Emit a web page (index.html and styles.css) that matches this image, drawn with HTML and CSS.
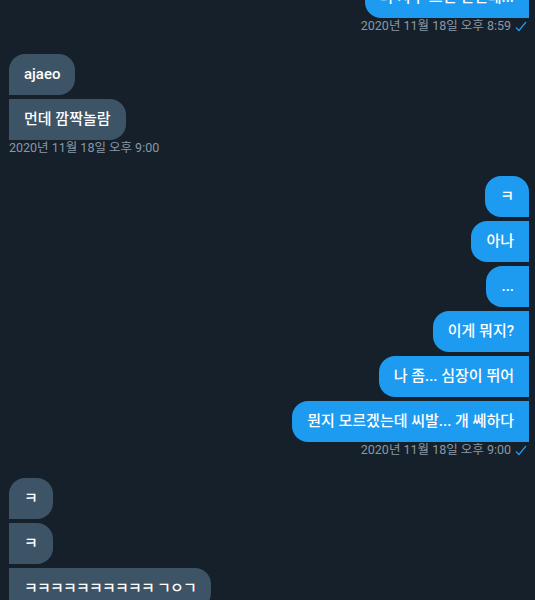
FILE: index.html
```html
<!DOCTYPE html>
<html lang="ko">
<head>
<meta charset="utf-8">
<link rel="stylesheet" href="styles.css">
</head>
<body>
<div class="thread">
  <div class="group sent">
    <div class="bubbles">
      <div class="bubble">나 자꾸 그런 편인데...</div>
    </div>
    <div class="time">2020년 11월 18일 오후 8:59 <svg class="check" width="12" height="11" viewBox="0 0 12 11"><path d="M1 6.5 L4 9.5 L11 1" fill="none" stroke="#1d9bf0" stroke-width="1.2"/></svg></div>
  </div>
  <div class="group recv">
    <div class="bubbles">
      <div class="bubble">ajaeo</div>
      <div class="bubble">먼데 깜짝놀람</div>
    </div>
    <div class="time">2020년 11월 18일 오후 9:00</div>
  </div>
  <div class="group sent">
    <div class="bubbles">
      <div class="bubble">ㅋ</div>
      <div class="bubble">아나</div>
      <div class="bubble">...</div>
      <div class="bubble">이게 뭐지?</div>
      <div class="bubble">나 좀... 심장이 뛰어</div>
      <div class="bubble">뭔지 모르겠는데 씨발... 개 쎄하다</div>
    </div>
    <div class="time">2020년 11월 18일 오후 9:00 <svg class="check" width="12" height="11" viewBox="0 0 12 11"><path d="M1 6.5 L4 9.5 L11 1" fill="none" stroke="#1d9bf0" stroke-width="1.2"/></svg></div>
  </div>
  <div class="group recv">
    <div class="bubbles">
      <div class="bubble">ㅋ</div>
      <div class="bubble">ㅋ</div>
      <div class="bubble tight">ㅋㅋㅋㅋㅋㅋㅋㅋㅋㅋ ㄱㅇㄱ</div>
    </div>
  </div>
</div>
</body>
</html>
```
FILE: styles.css
```css
html, body {
  margin: 0;
  padding: 0;
  background: #15202b;
  height: 100%;
  overflow: hidden;
}
body {
  font-family: "Segoe UI", Roboto, "Noto Sans CJK KR", sans-serif;
  color: #ffffff;
}
.thread {
  display: flex;
  flex-direction: column;
  gap: 20px;
  margin-top: -23px;
  padding: 0 6px 0 9px;
}
.group {
  display: flex;
  flex-direction: column;
}
.bubbles {
  display: flex;
  flex-direction: column;
  gap: 4px;
}
.sent, .sent .bubbles { align-items: flex-end; }
.recv, .recv .bubbles { align-items: flex-start; }
.bubble {
  font-size: 15px;
  font-weight: 500;
  line-height: 21px;
  padding: 10px 15px;
  white-space: nowrap;
}
.bubble.tight {
  letter-spacing: -0.8px;
}
.sent .bubble {
  background: #1d9bf0;
  border-radius: 16px 0 0 16px;
}
.sent .bubble:first-child {
  border-radius: 16px 16px 0 16px;
}
.recv .bubble {
  background: #3d5466;
  border-radius: 0 16px 16px 0;
}
.recv .bubble:first-child {
  border-radius: 16px 16px 16px 0;
}
.time {
  display: flex;
  align-items: center;
  gap: 4px;
  font-size: 12.5px;
  line-height: 16px;
  color: #8899a6;
}
.check {
  display: block;
  margin-right: 2px;
}
```
